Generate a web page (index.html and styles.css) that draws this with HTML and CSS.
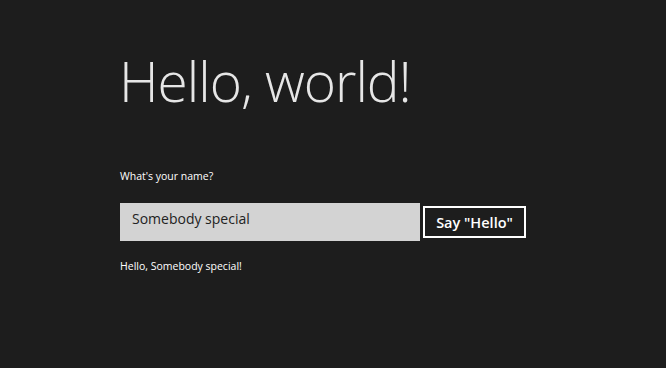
FILE: index.html
```html
<!DOCTYPE html>
<html>
<head>
<meta charset="utf-8">
<link rel="stylesheet" href="styles.css">
</head>
<body>
<main class="page">
  <h1 class="title">Hello, world!</h1>
  <p class="label">What's your name?</p>
  <div class="form-row">
    <div class="input">Somebody special</div>
    <button class="say-btn">Say "Hello"</button>
  </div>
  <p class="greeting">Hello, Somebody special!</p>
</main>
</body>
</html>
```
FILE: styles.css
```css
html, body {
  margin: 0;
  padding: 0;
  background: #1d1d1d;
  width: 666px;
  height: 368px;
  overflow: hidden;
}
.page {
  padding: 41px 0 0 119px;
  font-family: "Open Sans", "Noto Sans", sans-serif;
  color: #ffffff;
}
.title {
  margin: 0;
  font-weight: 300;
  font-size: 55px;
  line-height: 80px;
  color: #e6e6e6;
  letter-spacing: -1px;
}
.label {
  margin: 47px 0 0 1px;
  font-size: 10.5px;
  line-height: 16px;
}
.form-row {
  display: flex;
  align-items: center;
  gap: 3px;
  margin: 19px 0 0 1px;
}
.input {
  box-sizing: border-box;
  width: 300px;
  height: 38px;
  background: #d3d3d3;
  color: #222222;
  font-size: 14px;
  line-height: 20px;
  padding: 6px 12px;
}
.say-btn {
  box-sizing: border-box;
  width: 103px;
  height: 32px;
  background: transparent;
  border: 2px solid #ffffff;
  color: #ffffff;
  font-family: "Open Sans", "Noto Sans", sans-serif;
  font-weight: 600;
  font-size: 14.5px;
  padding: 0;
}
.greeting {
  margin: 17px 0 0 1px;
  font-size: 10.5px;
  line-height: 16px;
}
```
